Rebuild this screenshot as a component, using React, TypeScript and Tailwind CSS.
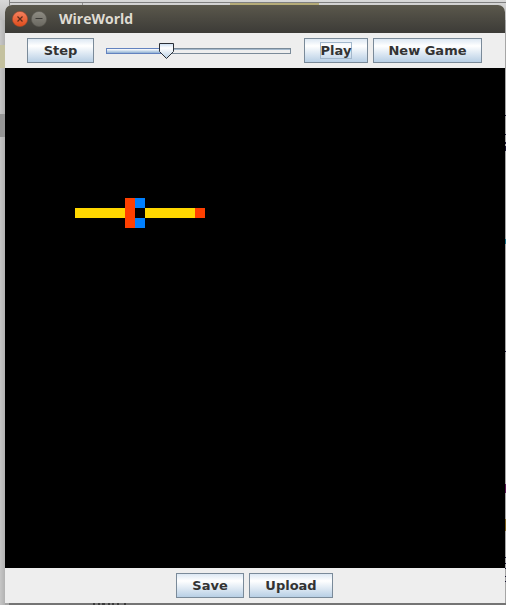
import { useState } from "react";
import type { ReactNode } from "react";

type Cell = { x: number; y: number; w: number; h: number; fill: string };

const WIRE = "#ffd700";
const HEAD = "#0080ff";
const TAIL = "#ff4000";

const cells: Cell[] = [
  { x: 7, y: 14, w: 5, h: 1, fill: WIRE },
  { x: 12, y: 13, w: 1, h: 3, fill: TAIL },
  { x: 13, y: 13, w: 1, h: 1, fill: HEAD },
  { x: 13, y: 15, w: 1, h: 1, fill: HEAD },
  { x: 14, y: 14, w: 5, h: 1, fill: WIRE },
  { x: 19, y: 14, w: 1, h: 1, fill: TAIL },
];

function MetalButton({ children, width, focused = false }: { children: ReactNode; width: string; focused?: boolean }) {
  return (
    <button
      type="button"
      className={`${width} flex h-[25px] shrink-0 items-center justify-center border border-[#7a8a99] bg-linear-to-b from-[#dde8f3] via-white via-30% to-[#b8cfe5] text-[13px] leading-[15px] font-bold text-[#333333]`}
    >
      <span className={focused ? "border border-[#a3b8cc]" : "border border-transparent"}>{children}</span>
    </button>
  );
}

function SpeedSlider() {
  const [speed, setSpeed] = useState(33);
  return (
    <div className="relative mr-2 ml-[7px] h-4 w-[185px] shrink-0">
      <input
        type="range"
        aria-label="Speed"
        min={0}
        max={100}
        value={speed}
        onChange={(e) => setSpeed(Number(e.target.value))}
        className="absolute inset-0 m-0 w-full cursor-pointer opacity-0"
      />
      <div className="pointer-events-none absolute inset-x-0 top-[5px] h-[6px] border border-[#7a8a99] bg-linear-to-b from-[#a3b8cc] from-25% to-[#eeeeee] to-25%" />
      <div
        className="pointer-events-none absolute top-[5px] left-0 h-[6px] border border-r-0 border-[#6382bf] bg-linear-to-b from-white via-[#c8d9ea] to-[#8fb0d4]"
        style={{ width: `${speed}%` }}
      />
      <svg
        className="pointer-events-none absolute top-0 -ml-2 h-4 w-[15px]"
        style={{ left: `${speed}%` }}
        viewBox="0 0 15 16"
        aria-hidden="true"
      >
        <defs>
          <linearGradient id="thumb" x1="0" y1="0" x2="0" y2="1">
            <stop offset="0" stopColor="#c8ddf2" />
            <stop offset="0.3" stopColor="#ffffff" />
            <stop offset="1" stopColor="#b8cfe5" />
          </linearGradient>
        </defs>
        <path d="M.5 .5H14.5V8.5L7.5 15.5L.5 8.5Z" fill="url(#thumb)" stroke="#2b2f36" />
      </svg>
    </div>
  );
}

function Desktop() {
  return (
    <div aria-hidden="true" className="absolute inset-0 overflow-hidden bg-[#a6a6a6]">
      <div className="absolute inset-y-0 left-0 w-[5px] bg-linear-to-r from-[#c6c6c6] to-[#b2b2b2]" />
      <div className="absolute inset-x-0 top-0 h-5 bg-linear-to-b from-[#d8d8d8] to-[#bcbcbc]" />
      <div className="absolute top-[2px] right-0 left-[9px] h-px bg-[#808080]" />
      <div className="absolute top-0 left-[9px] h-5 w-px bg-[#858585]" />
      <div className="absolute top-[3px] left-[82px] h-5 w-px bg-[#909090]" />
      <div className="absolute top-[3px] left-[230px] h-[2px] w-[89px] bg-[#b5ab78]" />
      <div className="absolute top-[45px] left-0 h-[23px] w-[5px] bg-[#c4c19f]" />
      <div className="absolute top-[114px] left-0 h-[23px] w-[5px] bg-[#969696]" />
      <div className="absolute right-0 bottom-0 left-[9px] h-[2px] bg-[#747474]" />
      <svg className="absolute bottom-0 left-[93px] h-[2px] w-9" viewBox="0 0 36 2">
        <path d="M0 0h2v2h-2zM5 0h2v2h-2zM9 0h3v2h-3zM15 0h2v2h-2zM19 0h2v2h-2zM24 0h2v2h-2zM31 0h2v2h-2z" fill="#3c3c3c" />
      </svg>
      <svg className="absolute top-0 right-0 h-[605px] w-px" viewBox="0 0 1 605">
        <path d="M0 115h1v1h-1zM0 134h1v1h-1zM0 142h1v2h-1zM0 146h1v5h-1zM0 351h1v1h-1zM0 557h1v1h-1zM0 563h1v1h-1zM0 568h1v1h-1zM0 576h1v1h-1zM0 581h1v1h-1z" fill="#171330" />
        <path d="M0 239h1v5h-1z" fill="#19738a" />
        <path d="M0 484h1v9h-1z" fill="#5a1553" />
        <path d="M0 519h1v12h-1z" fill="#7c6223" />
      </svg>
    </div>
  );
}

export default function App() {
  return (
    <div className="relative pt-[5px] pr-px pb-[2px] pl-[5px] font-['DejaVu_Sans',sans-serif]">
      <Desktop />
      <main className="relative overflow-hidden rounded-t-[7px] bg-[#eeeeee]">
        <header className="flex h-7 items-center bg-linear-to-b from-[#5b584c] to-[#3c3b37] pl-[7px]">
          <button type="button" aria-label="Close" className="size-4 shrink-0 rounded-full">
            <svg viewBox="0 0 16 16" className="size-4" aria-hidden="true">
              <defs>
                <linearGradient id="close" x1="0" y1="0" x2="0" y2="1">
                  <stop offset="0" stopColor="#f68260" />
                  <stop offset="1" stopColor="#df4c1b" />
                </linearGradient>
              </defs>
              <circle cx="8" cy="8" r="7.6" fill="url(#close)" stroke="#a64a2c" strokeWidth=".6" />
              <path d="M5.5 5.5L10.5 10.5M10.5 5.5L5.5 10.5" stroke="#5c2c1b" strokeWidth="1.2" />
            </svg>
          </button>
          <button type="button" aria-label="Minimize" className="ml-[3px] size-4 shrink-0 rounded-full">
            <svg viewBox="0 0 16 16" className="size-4" aria-hidden="true">
              <defs>
                <linearGradient id="minimize" x1="0" y1="0" x2="0" y2="1">
                  <stop offset="0" stopColor="#8f8d84" />
                  <stop offset="1" stopColor="#696760" />
                </linearGradient>
              </defs>
              <circle cx="8" cy="8" r="7.6" fill="url(#minimize)" stroke="#5d5b54" strokeWidth=".6" />
              <path d="M4.5 7.5H11.5" stroke="#3c3b37" />
            </svg>
          </button>
          <h1 className="ml-3 font-['Open_Sans',sans-serif] text-[14px] leading-7 font-bold text-[#dfdbd2]">WireWorld</h1>
        </header>
        <div className="flex h-[35px] items-center justify-center gap-[5px] pr-px">
          <MetalButton width="w-[67px]">Step</MetalButton>
          <SpeedSlider />
          <MetalButton width="w-[64px]" focused>
            Play
          </MetalButton>
          <MetalButton width="w-[109px]">New Game</MetalButton>
        </div>
        <svg viewBox="0 0 50 50" role="img" aria-label="WireWorld board" shapeRendering="crispEdges" className="block w-full bg-black">
          {cells.map((c) => (
            <rect key={`${c.x}-${c.y}`} x={c.x} y={c.y} width={c.w} height={c.h} fill={c.fill} />
          ))}
        </svg>
        <footer className="flex h-[35px] items-center justify-center gap-[5px] pr-px">
          <MetalButton width="w-[68px]">Save</MetalButton>
          <MetalButton width="w-[84px]">Upload</MetalButton>
        </footer>
      </main>
    </div>
  );
}
